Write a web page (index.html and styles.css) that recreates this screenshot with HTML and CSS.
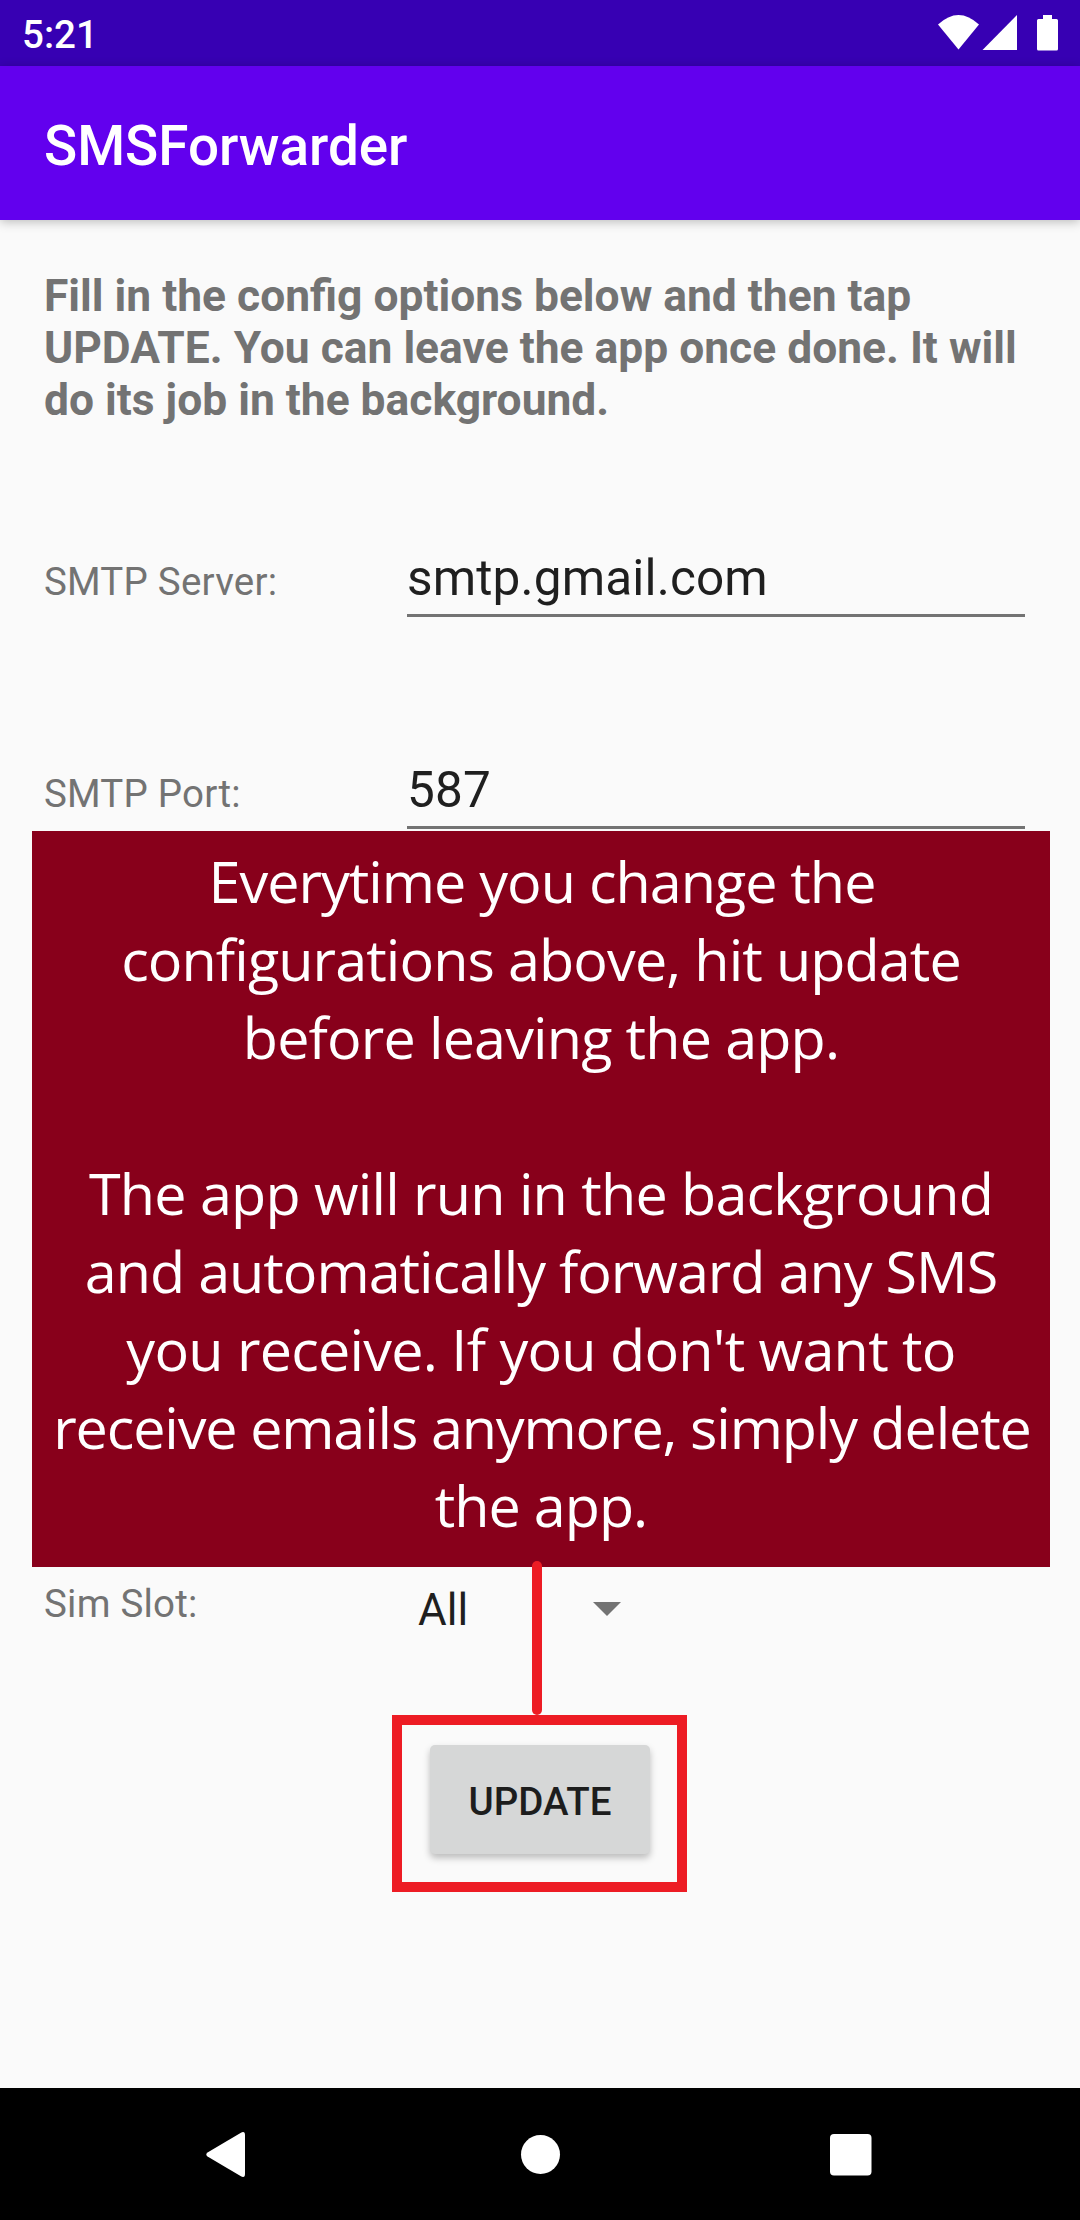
FILE: index.html
```html
<!DOCTYPE html>
<html lang="en">
<head>
<meta charset="utf-8">
<title>SMSForwarder</title>
<link rel="stylesheet" href="styles.css">
</head>
<body>
<div class="screen">
  <header class="status-bar">
    <span class="clock">5:21</span>
    <svg class="status-icons" width="124" height="40" viewBox="936 12 124 40" fill="#fff" aria-hidden="true">
      <path d="M938 24.500Q958.500 5.500 979 24.500L958.500 49.500z"/>
      <path d="M982.500 50L1017 15V50z"/>
      <path d="M1043 15h9v4h4.500q1.500 0 1.500 1.500v28.500q0 1.500-1.500 1.500h-18q-1.500 0-1.500-1.500v-28.500q0-1.500 1.500-1.500h4.500z"/>
    </svg>
  </header>
  <div class="app-bar"><h1 class="app-title">SMSForwarder</h1></div>
  <main class="content">
    <p class="intro">Fill in the config options below and then tap<br>UPDATE. You can leave the app once done. It will<br>do its job in the background.</p>
    <div class="field server"><span class="label">SMTP Server:</span><span class="input">smtp.gmail.com</span></div>
    <div class="field port"><span class="label">SMTP Port:</span><span class="input">587</span></div>
    <div class="sim">
      <span class="label">Sim Slot:</span>
      <span class="spinner">All</span>
      <svg class="caret" width="28" height="14" viewBox="0 0 28 14" aria-hidden="true"><path d="M0 0h28L14 14z" fill="#737373"/></svg>
    </div>
    <div class="highlight"><button class="update" type="button">UPDATE</button></div>
    <div class="callout">
      <div><span class="l1">Everytime you change the</span></div>
      <div><span class="l2">configurations above, hit update</span></div>
      <div><span class="l3">before leaving the app.</span></div>
      <div>&nbsp;</div>
      <div><span class="l4">The app will run in the background</span></div>
      <div><span class="l5">and automatically forward any SMS</span></div>
      <div><span class="l6">you receive. If you don't want to</span></div>
      <div><span class="l7">receive emails anymore, simply delete</span></div>
      <div><span class="l8">the app.</span></div>
    </div>
    <div class="connector"></div>
  </main>
  <nav class="nav-bar">
    <svg width="1080" height="132" viewBox="0 2088 1080 132" fill="#fff" aria-hidden="true">
      <path d="M207.500 2152.500L240.500 2133Q245 2130.500 245 2135V2174Q245 2178.500 240.500 2176L207.500 2156.500Q205 2154.500 207.500 2152.500z"/>
      <circle cx="540.500" cy="2154.500" r="19.500"/>
      <rect x="830" y="2134" width="41.500" height="41.500" rx="4"/>
    </svg>
  </nav>
</div>
</body>
</html>
```

FILE: styles.css
```css
* { box-sizing: border-box; }
body { margin: 0; background: #fafafa; font-family: Roboto, sans-serif; }
.screen { width: 1080px; height: 2220px; display: flex; flex-direction: column; overflow: hidden; }
.status-bar { height: 66px; flex: none; padding: 3px 20px 0 22px; background: #3700b3; display: flex; align-items: center; justify-content: space-between; }
.status-icons { margin-top: -5px; }
.clock { color: #fff; font-size: 38.5px; font-weight: 500; line-height: 62px; }
.app-bar { height: 154px; flex: none; padding-left: 44px; background: #6200ee; display: flex; align-items: center; box-shadow: 0 2px 10px rgba(0,0,0,.25); }
.app-title { margin: 5px 0 0; color: #fff; font-size: 54.8px; font-weight: 500; line-height: 64px; }
.content { flex: 1; position: relative; padding: 50px 55px 0 44px; display: flex; flex-direction: column; }
.intro { margin: 0; font-size: 44.36px; line-height: 52px; font-weight: 700; color: #737373; white-space: nowrap; }
.field { display: flex; align-items: baseline; height: 76px; margin-top: 115px; }
.port { margin-top: 136px; }
.label { width: 363px; flex: none; font-size: 38.5px; line-height: 46px; letter-spacing: .22px; color: #737373; }
.input { flex: 1; height: 76px; font-size: 49.5px; line-height: 74px; letter-spacing: .15px; color: #1f1f1f; border-bottom: 3px solid #737373; }
.sim { display: flex; margin-top: 751px; height: 66px; }
.sim .label { margin-top: 1px; }
.spinner { width: 175px; margin: 4px 0 0 11px; font-size: 44px; line-height: 52px; color: #1f1f1f; }
.caret { margin-top: 22px; }
.highlight { align-self: flex-start; margin: 69px 0 0 348px; width: 295px; height: 177px; padding: 20px 27px 0 28px; border: 10px solid #ed1c24; }
.update { display: block; width: 220px; height: 109px; padding: 5px 0 0; border: 0; border-radius: 5px; background: #d6d7d7; color: #1d1d1d; font: 500 38.5px/46px Roboto, sans-serif; box-shadow: 0 4px 7px rgba(0,0,0,.25); }
.callout { position: absolute; left: 32px; top: 611px; width: 1018px; height: 736px; padding-top: 11px; background: #88001b; color: #fff; font: 57.5px/78px "Open Sans", "Noto Sans", sans-serif; text-align: center; white-space: nowrap; }
.l1 { letter-spacing: -1px; margin-left: 2px; }
.l2 { letter-spacing: -.9px; }
.l3 { letter-spacing: -.85px; }
.l4 { letter-spacing: -.79px; }
.l5 { letter-spacing: -1px; }
.l6 { letter-spacing: -.75px; }
.l7 { letter-spacing: -1.15px; margin-left: 2px; }
.l8 { letter-spacing: -1px; }
.connector { position: absolute; left: 532px; top: 1341px; width: 10px; height: 154px; border-radius: 5px; background: #ed1c24; }
.nav-bar { height: 132px; flex: none; background: #000; }
.nav-bar svg { display: block; }
```
